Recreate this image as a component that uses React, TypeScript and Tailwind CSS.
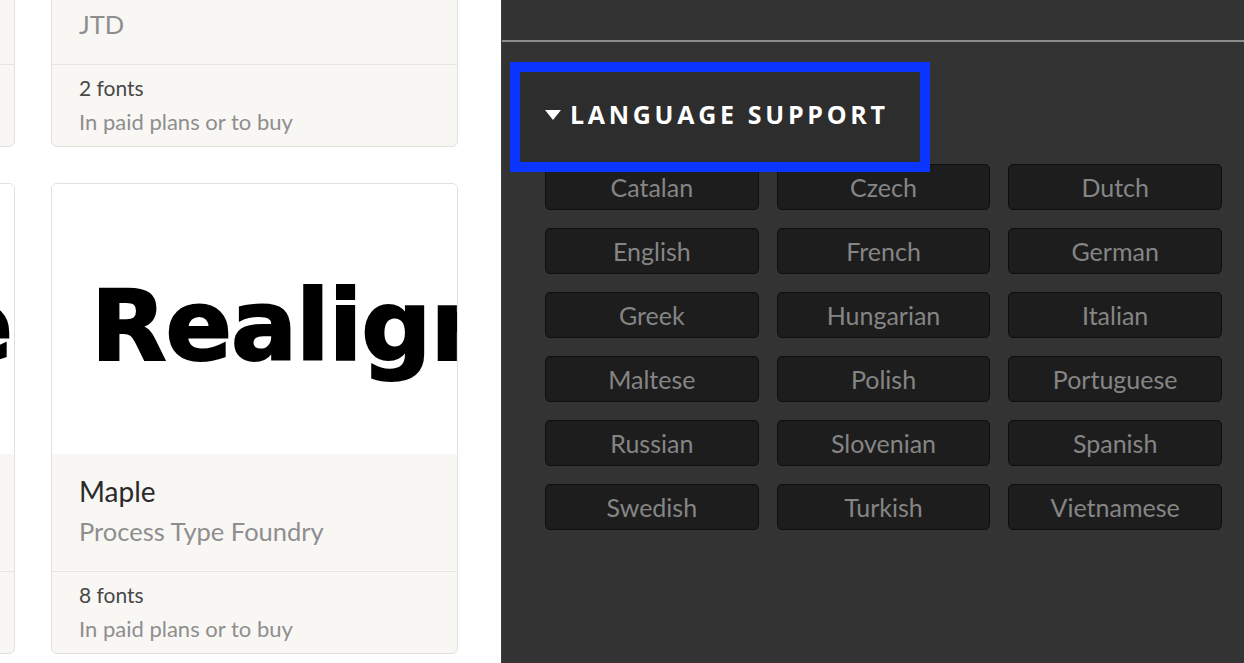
const languages = [
  "Catalan", "Czech", "Dutch",
  "English", "French", "German",
  "Greek", "Hungarian", "Italian",
  "Maltese", "Polish", "Portuguese",
  "Russian", "Slovenian", "Spanish",
  "Swedish", "Turkish", "Vietnamese",
];

type Family = {
  name: string;
  foundry: string;
  count: number;
  sample: string;
  alignEnd?: boolean;
};

function FamilyCard({ family }: { family: Family }) {
  return (
    <div className="w-[407px] h-[471px] shrink-0 flex flex-col rounded-[6px] border border-[#e2e1de] overflow-hidden bg-[#f8f7f4]">
      <div
        className={`h-[270px] bg-white flex items-center overflow-hidden pt-[14px] ${family.alignEnd ? "justify-end pr-[2px]" : "pl-[39px]"}`}
      >
        <span className="shrink-0 whitespace-nowrap text-[98px] leading-none font-bold text-black tracking-[-1px] [font-family:'DejaVu_Sans',Arial,sans-serif] [-webkit-text-stroke:2px_black]">
          {family.sample}
        </span>
      </div>
      <div className="h-[118px] px-[27px] pt-[20px] border-b border-[#e6e4df]">
        <div className="text-[28px] leading-[34px] text-[#2a2a2a]">{family.name}</div>
        <div className="text-[25.5px] leading-[46px] text-[#8e8e8e]">{family.foundry}</div>
      </div>
      <div className="flex-1 px-[27px] pt-[8px]">
        <div className="text-[21px] leading-[30px] text-[#484848]">{family.count} fonts</div>
        <div className="text-[22px] leading-[38px] text-[#8e8e8e]">In paid plans or to buy</div>
      </div>
    </div>
  );
}

export default function App() {
  const top: Family[] = [
    { name: "Kinuta", foundry: "Kinuta", count: 4, sample: "Realigne", alignEnd: true },
    { name: "Gautreaux", foundry: "JTD", count: 2, sample: "Realign" },
  ];
  const bottom: Family[] = [
    { name: "Cabrito", foundry: "Typofonderie", count: 6, sample: "Realigne", alignEnd: true },
    { name: "Maple", foundry: "Process Type Foundry", count: 8, sample: "Realign the" },
  ];

  return (
    <div className="w-[1244px] h-[663px] flex overflow-hidden bg-white [font-family:Lato,'Open_Sans',sans-serif]">
      {/* results grid, scrolled so only part of two rows shows */}
      <div className="w-[501px] h-full shrink-0 overflow-hidden">
        <div className="ml-[-392px] mt-[-324px] flex flex-col gap-[36px]">
          {[top, bottom].map((row, i) => (
            <div key={i} className="flex gap-[36px]">
              {row.map((f) => (
                <FamilyCard key={f.name} family={f} />
              ))}
            </div>
          ))}
        </div>
      </div>

      {/* filter sidebar */}
      <div className="flex-1 h-full bg-[#333333] border-l border-[#3d3d3d]">
        <div className="h-[40px]" />
        <div className="h-[2px] bg-[#8c8c8c]" />
        <div className="pl-[18px] pt-[30px]">
          <div className="w-[400px] h-[90px] flex items-center pl-[25px] pb-[6px] bg-[#2d2d2d] outline-[10px] outline-solid outline-[#0a36ff]">
            <svg width="16" height="10" viewBox="0 0 16 10" className="mr-[9px] mt-[2px]">
              <path d="M0 0h16L8 10z" fill="#ffffff" />
            </svg>
            <span className="text-[25px] leading-none font-bold text-white tracking-[3.7px] [font-family:'Open_Sans',Lato,sans-serif]">
              LANGUAGE SUPPORT
            </span>
          </div>
          <div className="ml-[25px] mt-[2px] w-[677px] grid grid-cols-3 gap-x-[18px] gap-y-[18px]">
            {languages.map((lang) => (
              <button
                key={lang}
                className="h-[46px] rounded-[5px] bg-[#1d1d1d] border border-[#0e0e0e] text-[25px] leading-none text-[#858585]"
              >
                {lang}
              </button>
            ))}
          </div>
        </div>
      </div>
    </div>
  );
}
